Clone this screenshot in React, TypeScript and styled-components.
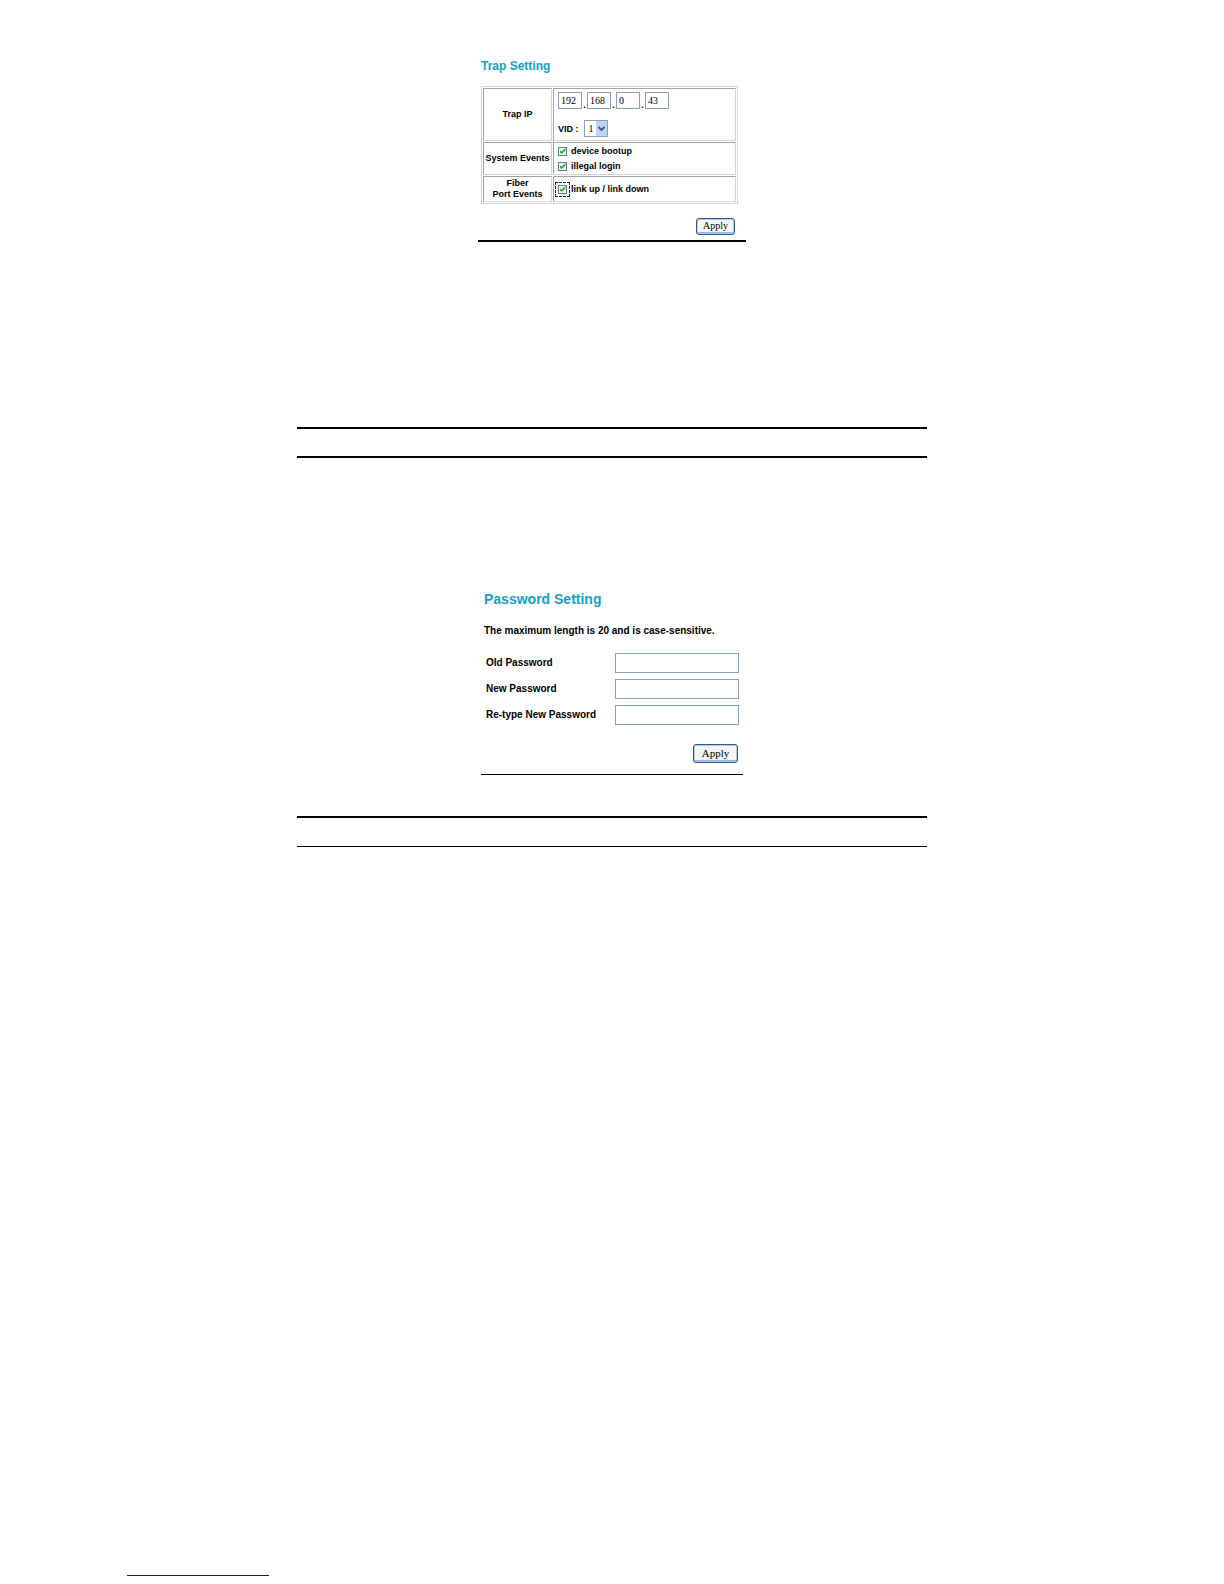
import React from "react";
import styled, { createGlobalStyle, css } from "styled-components";

const sans = '"Liberation Sans", Arial, sans-serif';
const serif = '"Liberation Serif", "Times New Roman", serif';

const GlobalStyle = createGlobalStyle`
  *, *::before { box-sizing: border-box; }
  body { margin: 0; background: #fff; color: #000; font-family: ${sans}; }
`;

const Page = styled.main`
  display: flex;
  flex-direction: column;
  align-items: center;
  min-height: 100vh;
  padding: 56px 24px 8px;
`;

const Panel = styled.form<{ $width: number; $line: number; $right: number }>`
  display: flex;
  flex-direction: column;
  width: 100%;
  max-width: ${(p) => p.$width}px;
  padding: 0 ${(p) => p.$right}px 0 3px;
  border-bottom: ${(p) => p.$line}px solid #000;
`;

const Title = styled.h2<{ $large?: boolean }>`
  margin: 0;
  color: #129fca;
  font-size: ${(p) => (p.$large ? 14 : 12)}px;
  line-height: 20px;
  font-weight: bold;
`;

const TrapTable = styled.table`
  width: 100%;
  margin: 10px 0 14px;
  border: 1px solid #d6d4cc;
  border-collapse: separate;
  border-spacing: 1px;
  font-size: 9px;
  line-height: 11px;
`;

const cell = css`
  padding: 0;
  border: 1px solid;
  border-color: #a5a39c #d6d4cc #d6d4cc #a5a39c;
`;

const HeadCell = styled.th<{ $height: number }>`
  ${cell}
  width: 69px;
  height: ${(p) => p.$height}px;
  font-weight: bold;
`;

const Cell = styled.td`
  ${cell}
  padding: 0 4px;
  font-weight: bold;
`;

const AddressRow = styled.div`
  display: flex;
  align-items: flex-end;
`;

const Octet = styled.input`
  width: 24px;
  height: 17px;
  padding: 0 2px;
  border: 1px solid #8ba0b8;
  background: #fff;
  color: #000;
  font: 10px/14px ${serif};
`;

const Dot = styled.span`
  width: 5px;
  text-align: center;
  line-height: 8px;
`;

const VidRow = styled.div`
  display: flex;
  align-items: center;
  gap: 5px;
  margin-top: 11px;
  line-height: 15px;
`;

const VidLabel = styled.label`
  padding-top: 2px;
`;

const SelectBox = styled.span`
  display: grid;
  align-items: center;
  width: 24px;
  height: 17px;
  > * { grid-area: 1 / 1; }
`;

const Select = styled.select`
  appearance: none;
  width: 100%;
  height: 100%;
  padding: 0 0 0 4px;
  border: 1px solid #8ba0b8;
  border-radius: 0;
  background: #fff;
  color: #000;
  font: 10px/14px ${serif};
`;

const Arrow = styled.svg`
  justify-self: end;
  margin-right: 1px;
  pointer-events: none;
`;

const CheckLine = styled.label`
  display: flex;
  align-items: center;
  gap: 4px;
  height: 15px;
`;

const Check = styled.input<{ $focused?: boolean }>`
  appearance: none;
  display: grid;
  place-items: center;
  width: 9px;
  height: 9px;
  margin: 0;
  border: 1px solid #5f809c;
  background: #f6f8f4;
  outline: ${(p) => (p.$focused ? "1px dashed #222" : "none")};
  outline-offset: 2px;

  &:checked::before {
    content: "";
    width: 6px;
    height: 6px;
    background: #27a327;
    clip-path: polygon(0 35%, 35% 62%, 100% 0, 100% 38%, 38% 100%, 0 68%);
  }
`;

const Apply = styled.button<{ $large?: boolean }>`
  width: ${(p) => (p.$large ? 45 : 39)}px;
  height: ${(p) => (p.$large ? 19 : 17)}px;
  padding: 0 0 2px;
  border: 1px solid #2d5689;
  border-radius: 3px;
  background: #f5f5f1;
  box-shadow: inset 0 0 0 1px #b3cbf0, inset 0 -2px 0 #8fb2e8;
  color: #000;
  font: ${(p) => (p.$large ? 11 : 10)}px/12px ${serif};
`;

const Actions = styled.div<{ $bottom: number; $right: number }>`
  display: flex;
  justify-content: flex-end;
  padding: 0 ${(p) => p.$right}px ${(p) => p.$bottom}px 0;
`;

const Note = styled.p`
  margin: 16px 0;
  font-size: 10px;
  line-height: 12px;
  font-weight: bold;
`;

const Fields = styled.div`
  display: grid;
  grid-template-columns: 1fr 124px;
  row-gap: 6px;
  align-items: center;
  margin: 0 0 19px 2px;
`;

const FieldLabel = styled.label`
  font-size: 10px;
  line-height: 12px;
  font-weight: bold;
`;

const PasswordInput = styled.input`
  width: 100%;
  height: 20px;
  padding: 0 3px;
  border: 1px solid #8ba0b8;
  background: #fff;
  font: 10px/14px ${serif};
`;

const Band = styled.div<{ $top: number; $bottom: number; $line: number }>`
  width: 100%;
  max-width: 630px;
  height: 31px;
  margin: ${(p) => p.$top}px 0 ${(p) => p.$bottom}px;
  border-top: 2px solid #000;
  border-bottom: ${(p) => p.$line}px solid #000;
`;

const FooterRule = styled.hr`
  align-self: flex-start;
  width: 142px;
  margin: auto 0 0 103px;
  border: 0;
  border-top: 1px solid #17177f;
`;

const octets = ["192", "168", "0", "43"];
const passwords = ["Old Password", "New Password", "Re-type New Password"];

function CheckOption({ text, focused }: { text: string; focused?: boolean }) {
  return (
    <CheckLine>
      <Check type="checkbox" defaultChecked $focused={focused} />
      {text}
    </CheckLine>
  );
}

export default function App() {
  const stop = (e: React.FormEvent) => e.preventDefault();
  return (
    <>
      <GlobalStyle />
      <Page>
        <Panel $width={268} $line={2} $right={8} onSubmit={stop}>
          <Title>Trap Setting</Title>
          <TrapTable>
            <tbody>
              <tr>
                <HeadCell scope="row" $height={53}>Trap IP</HeadCell>
                <Cell>
                  <AddressRow>
                    {octets.map((value, i) => (
                      <React.Fragment key={i}>
                        {i > 0 && <Dot>.</Dot>}
                        <Octet aria-label={`Trap IP part ${i + 1}`} defaultValue={value} />
                      </React.Fragment>
                    ))}
                  </AddressRow>
                  <VidRow>
                    <VidLabel htmlFor="vid">VID :</VidLabel>
                    <SelectBox>
                      <Select id="vid" defaultValue="1">
                        <option>1</option>
                      </Select>
                      <Arrow width="11" height="15" viewBox="0 0 11 15" aria-hidden="true">
                        <rect width="11" height="15" rx="1" fill="#bfd0f7" />
                        <path d="M2.5 6l3 3 3-3" fill="none" stroke="#44597f" strokeWidth="1.8" />
                      </Arrow>
                    </SelectBox>
                  </VidRow>
                </Cell>
              </tr>
              <tr>
                <HeadCell scope="row" $height={33}>System Events</HeadCell>
                <Cell>
                  <CheckOption text="device bootup" />
                  <CheckOption text="illegal login" />
                </Cell>
              </tr>
              <tr>
                <HeadCell scope="row" $height={26}>
                  Fiber
                  <br />
                  Port Events
                </HeadCell>
                <Cell>
                  <CheckOption text="link up / link down" focused />
                </Cell>
              </tr>
            </tbody>
          </TrapTable>
          <Actions $bottom={5} $right={3}>
            <Apply type="submit">Apply</Apply>
          </Actions>
        </Panel>

        <Band $top={185} $bottom={131} $line={2} />

        <Panel $width={262} $line={1} $right={4} onSubmit={stop}>
          <Title $large>Password Setting</Title>
          <Note>The maximum length is 20 and is case-sensitive.</Note>
          <Fields>
            {passwords.map((name, i) => (
              <React.Fragment key={name}>
                <FieldLabel htmlFor={`password-${i}`}>{name}</FieldLabel>
                <PasswordInput id={`password-${i}`} type="password" />
              </React.Fragment>
            ))}
          </Fields>
          <Actions $bottom={11} $right={1}>
            <Apply $large type="submit">Apply</Apply>
          </Actions>
        </Panel>

        <Band $top={41} $bottom={24} $line={1} />
        <FooterRule />
      </Page>
    </>
  );
}
